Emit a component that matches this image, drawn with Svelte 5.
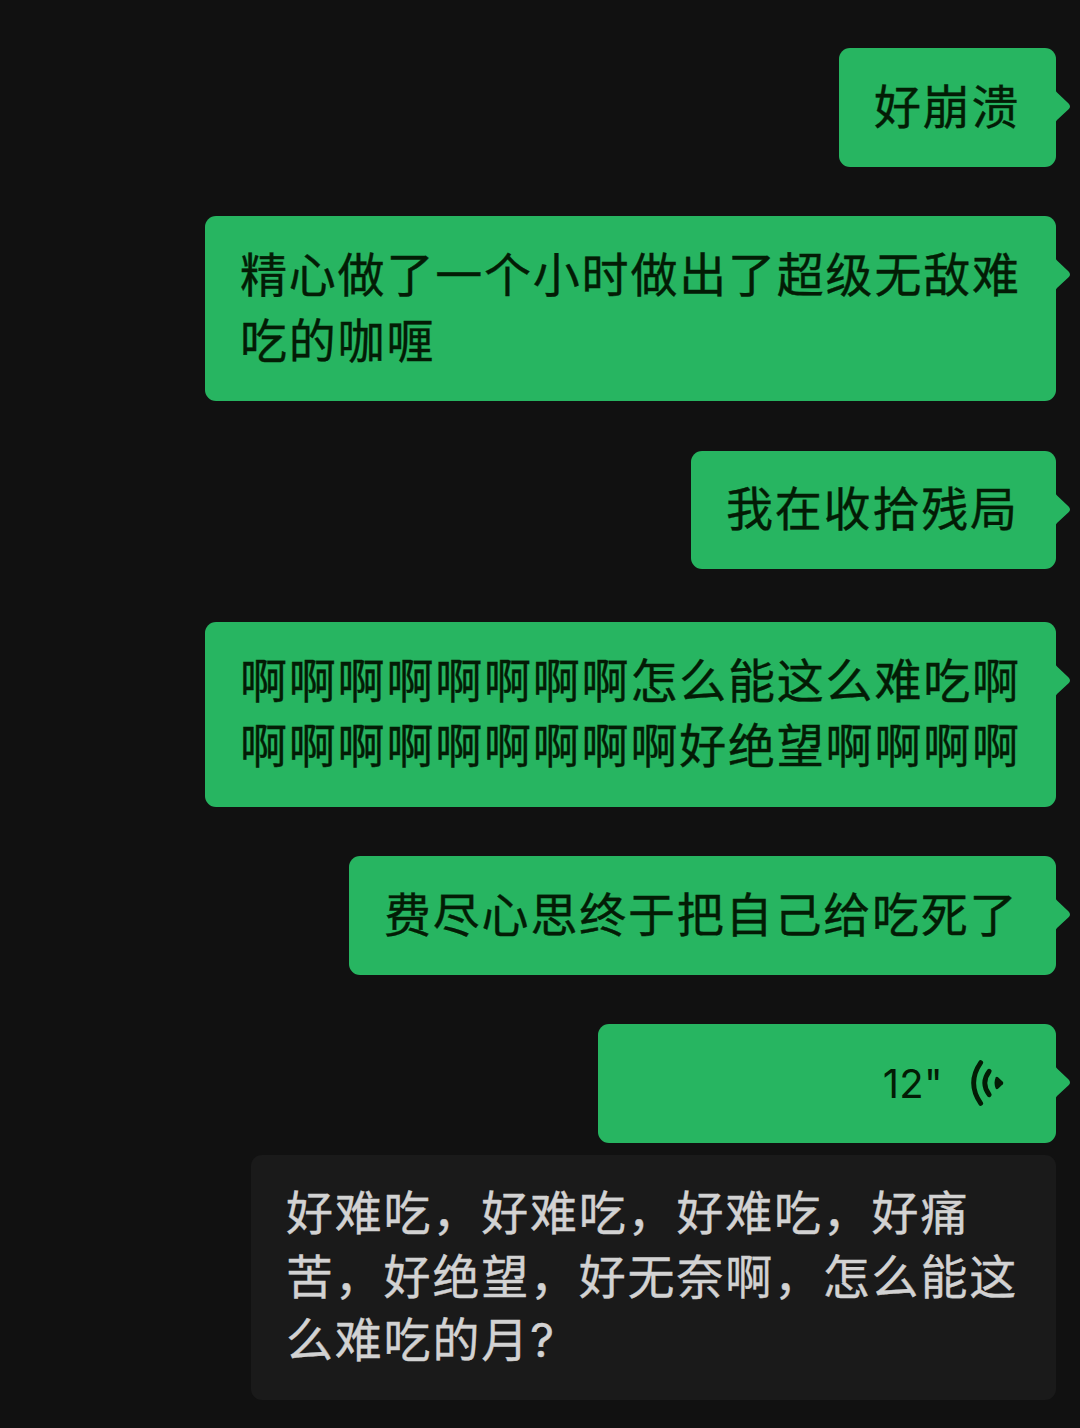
<script lang="ts">
	type Message = {
		id: number;
		kind: 'text' | 'voice' | 'transcript';
		width: number;
		lines?: string[];
		seconds?: number;
	};

	const messages: Message[] = [
		{ id: 1, kind: 'text', width: 217, lines: ['好崩溃'] },
		{ id: 2, kind: 'text', width: 851, lines: ['精心做了一个小时做出了超级无敌难', '吃的咖喱'] },
		{ id: 3, kind: 'text', width: 365, lines: ['我在收拾残局'] },
		{
			id: 4,
			kind: 'text',
			width: 851,
			lines: ['啊啊啊啊啊啊啊啊怎么能这么难吃啊', '啊啊啊啊啊啊啊啊啊好绝望啊啊啊啊']
		},
		{ id: 5, kind: 'text', width: 707, lines: ['费尽心思终于把自己给吃死了'] },
		{ id: 6, kind: 'voice', width: 458, seconds: 12 },
		{
			id: 7,
			kind: 'transcript',
			width: 805,
			lines: ['好难吃，好难吃，好难吃，好痛', '苦，好绝望，好无奈啊，怎么能这', '么难吃的月?']
		}
	];
</script>

<main class="chat">
	{#each messages as message (message.id)}
		<div
			class="bubble {message.kind}"
			class:double={message.kind === 'text' && message.lines?.length === 2}
			class:spaced={message.id === 4}
			style="width: {message.width}px"
		>
			{#if message.kind === 'voice'}
				<span class="duration">{message.seconds}"</span>
				<svg class="waves" width="36" height="48" viewBox="0 0 36 48" fill="none">
					<path d="M11.7 3.6 Q-2.4 24 11.7 44.4" stroke="currentColor" stroke-width="4.8" stroke-linecap="round" />
					<path d="M20.2 12.2 Q11.4 24 20.2 35.8" stroke="currentColor" stroke-width="4.8" stroke-linecap="round" />
					<path
						d="M29 18.3 L33.8 22.8 Q35 24 33.8 25.2 L29 29.7 Q27.6 30.7 26.7 29.4 Q24.4 24 26.7 18.6 Q27.6 17.3 29 18.3 Z"
						fill="currentColor"
					/>
				</svg>
			{:else}
				{#each message.lines ?? [] as line}
					<p>{line}</p>
				{/each}
			{/if}

			{#if message.kind !== 'transcript'}
				<svg class="tail" width="16" height="36" viewBox="0 0 16 36">
					<path d="M0 0 Q0.6 2.2 2 3.4 L13.6 14.6 Q16.4 17.4 13.6 20.2 L2 31 Q0.6 32.4 0 35 Z" fill="currentColor" />
				</svg>
			{/if}
		</div>
	{/each}
</main>

<style>
	:global(body) {
		background: #111111;
	}

	.chat {
		box-sizing: border-box;
		height: 1428px;
		padding: 48px 24px 0 0;
		display: flex;
		flex-direction: column;
		align-items: flex-end;
		overflow: hidden;
		font-family: Inter, 'Noto Sans CJK SC', sans-serif;
		background: #111111;
	}

	.bubble {
		box-sizing: border-box;
		position: relative;
		flex: none;
		height: 118.5px;
		margin-bottom: 49.5px;
		padding: 0 35px 2px;
		display: flex;
		flex-direction: column;
		justify-content: center;
		border-radius: 11px;
		background: #27b561;
		color: #031c05;
	}

	.double {
		height: 185px;
	}

	.spaced {
		margin-top: 3px;
	}

	p {
		margin: 0;
		font-size: 47px;
		line-height: 65.5px;
		letter-spacing: 1.8px;
		white-space: nowrap;
		-webkit-text-stroke: 0.4px currentColor;
	}

	.voice {
		flex-direction: row;
		align-items: center;
		justify-content: flex-end;
		margin-bottom: 12px;
		padding: 0 51px 0 0;
	}

	.duration {
		padding-top: 2px;
		font-size: 40px;
		line-height: 48px;
		letter-spacing: 0.3px;
	}

	.waves {
		margin-left: 26px;
	}

	.tail {
		position: absolute;
		left: calc(100% - 1px);
		top: 41px;
		color: #27b561;
	}

	.transcript {
		height: 245.5px;
		margin-bottom: 0;
		background: #1a1a1a;
		color: #d2d2d2;
	}

	.transcript p {
		line-height: 63.5px;
	}
</style>
